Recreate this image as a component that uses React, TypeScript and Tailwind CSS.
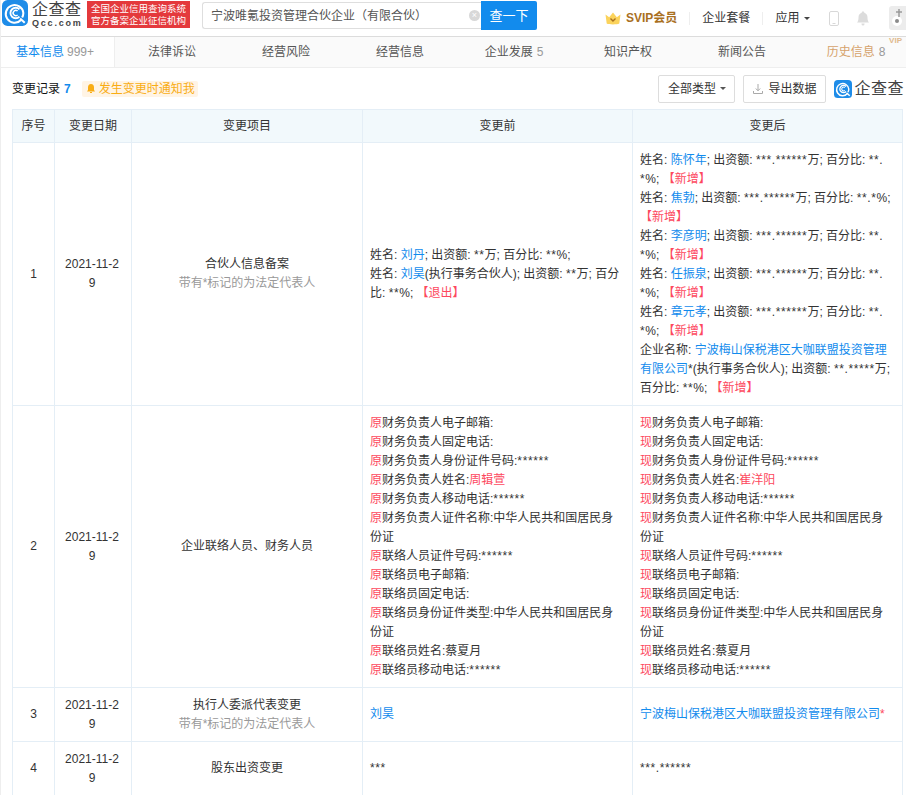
import React from 'react';

const FONT = "font-['Liberation_Sans','Noto_Sans_CJK_SC',sans-serif]";

const QccMark: React.FC<{ size: number }> = ({ size }) => (
  <svg width={size} height={size} viewBox="0 0 28 28" className="shrink-0">
    <rect width="28" height="28" rx="6" fill="#1e8ce8" />
    <path d="M20.500 21.500A9.500 9.500 0 1 1 23 14c0 1.800-.5 3.400-1.300 4.800" fill="none" stroke="#fff" strokeWidth="2.200" />
    <path d="M18.800 10.200a5.600 5.600 0 1 0 0 7.600" fill="none" stroke="#fff" strokeWidth="2" />
    <path d="M16.800 11.800a2.900 2.900 0 1 0 0 4.400" fill="none" stroke="#fff" strokeWidth="1.600" />
    <path d="M19.500 20l5 4.500" stroke="#fff" strokeWidth="2.200" />
  </svg>
);

const TopBar: React.FC = () => (
  <div className="flex h-[37px] items-start overflow-hidden border-b border-[#dcdcdc] bg-white">
    <div className="ml-px flex w-[85px] shrink-0 items-start">
      <QccMark size={26} />
      <div className="ml-[4px] flex w-[50px] flex-col">
        <span className="mt-[1px] text-[16px] leading-[17px] tracking-[0.5px] whitespace-nowrap text-[#444]">企查查</span>
        <span className="mt-[1px] text-[9px] leading-[9px] font-bold tracking-[1.8px] whitespace-nowrap text-[#444]">Qcc.com</span>
      </div>
    </div>
    <div className="mt-[1px] flex h-[27px] w-[103px] shrink-0 flex-col items-center justify-center bg-[#e4393c] text-[9.5px] leading-[12px] whitespace-nowrap text-white">
      <span>全国企业信用查询系统</span>
      <span>官方备案企业征信机构</span>
    </div>
    <div className="mt-[2px] ml-[12px] flex h-[27px] w-[279px] shrink-0 items-center rounded-l-[3px] border border-r-0 border-[#dedede]">
      <span className="ml-[8px] flex-1 text-[12px] whitespace-nowrap text-[#555]">宁波唯氪投资管理合伙企业（有限合伙）</span>
      <span className="mr-[1px] flex h-[11px] w-[11px] items-center justify-center rounded-full bg-[#d8d8d8] text-[9px] leading-none text-white">×</span>
    </div>
    <div className="mt-[1px] flex h-[29px] w-[56px] shrink-0 items-center justify-center rounded-r-[2px] bg-[#128bed] text-[13px] text-white">查一下</div>
    <div className="mt-[6px] ml-[68px] flex shrink-0 items-center whitespace-nowrap">
      <svg width="16" height="13" viewBox="0 0 16 13">
        <path d="M0.500 2.500l3.700 2.700L8 0.500l3.800 4.700 3.700-2.700-1.200 9c-2 1.200-10.600 1.200-12.600 0z" fill="#fbd35c" />
        <path d="M5.500 6.500L8 9l2.500-2.500" fill="none" stroke="#a9701f" strokeWidth="1.400" />
      </svg>
      <span className="ml-[5px] text-[12px] font-bold text-[#a9701f]">SVIP会员</span>
      <span className="mx-[12px] h-[13px] w-px bg-[#eeeeee]" />
      <span className="text-[12px] text-[#333]">企业套餐</span>
      <span className="mx-[12px] h-[13px] w-px bg-[#eeeeee]" />
      <span className="text-[12px] text-[#333]">应用</span>
      <span className="ml-[5px] h-0 w-0 border-x-[3px] border-t-[3px] border-x-transparent border-t-[#444]" />
      <svg width="10" height="15" viewBox="0 0 10 15" className="ml-[19px]">
        <rect x="0.500" y="0.500" width="9" height="14" rx="1.500" fill="none" stroke="#d8d8d8" />
        <path d="M3.500 12.500h3" stroke="#d8d8d8" />
      </svg>
      <svg width="14" height="15" viewBox="0 0 14 15" className="ml-[17px]">
        <path d="M7 0.500c1 0 1.300.6 1.300 1.200C10.500 2.400 11.500 4 11.500 6.500c0 2.500.5 4 1.500 5H1c1-1 1.500-2.500 1.500-5C2.500 4 3.500 2.400 5.700 1.700 5.700 1.100 6 .5 7 .5z" fill="#dcdcdc" />
        <path d="M5.500 12.500h3V13a1.500 1.500 0 0 1-3 0z" fill="#dcdcdc" />
      </svg>
      <svg width="24" height="24" viewBox="0 0 24 24" className="ml-[19px] shrink-0">
        <rect width="24" height="24" rx="3" fill="#ececec" />
        <circle cx="8" cy="15" r="5" fill="#fff" />
        <circle cx="8" cy="15" r="2" fill="#8a8a8a" />
        <path d="M10 3v8M7 6h6" stroke="#9a9a9a" strokeWidth="1.500" />
      </svg>
    </div>
  </div>
);

const tabs: { label: string; count?: string }[] = [
  { label: '法律诉讼' },
  { label: '经营风险' },
  { label: '经营信息' },
  { label: '企业发展', count: '5' },
  { label: '知识产权' },
  { label: '新闻公告' },
];

const TabBar: React.FC = () => (
  <div className="flex h-[31px] items-center border-b border-[#eeeeee] bg-[#fafafa] text-[12px]">
    <div className="flex h-full w-[114px] shrink-0 items-center border-r border-[#eeeeee] bg-white pl-[15px] whitespace-nowrap">
      <span className="text-[#128bed]">基本信息</span>
      <span className="ml-[3px] text-[#999]">999+</span>
    </div>
    <div className="flex flex-1 items-center">
      {tabs.map((t) => (
        <div key={t.label} className="flex w-[114px] shrink-0 justify-center text-[#555]">
          {t.label}
          {t.count && <span className="ml-[4px] text-[#999]">{t.count}</span>}
        </div>
      ))}
      <div className="relative flex w-[114px] shrink-0 justify-center text-[#d6a36c]">
        历史信息
        <span className="ml-[4px] text-[#999]">8</span>
        <span className="absolute top-[-6px] right-[11px] text-[8px] leading-none font-bold text-[#e0b98c]">VIP</span>
      </div>
    </div>
  </div>
);

const Blue: React.FC<{ children: React.ReactNode }> = ({ children }) => <span className="text-[#128bed]">{children}</span>;
const Red: React.FC<{ children: React.ReactNode }> = ({ children }) => <span className="text-[#fd485e]">{children}</span>;
// masked values, the asterisks sit wider apart than in Liberation Sans
const Mask: React.FC<{ children: React.ReactNode }> = ({ children }) => <span className="tracking-[0.6px]">{children}</span>;

const partner = (name: string) => (
  <div key={name}>
    姓名: <Blue>{name}</Blue>; 出资额: <Mask>***.******</Mask>万; 百分比: <Mask>**.<wbr />*</Mask>%; <Red>【新增】</Red>
  </div>
);

const financeRows = (tag: string, person: string) => (
  [
    ['财务负责人电子邮箱:', '', ''],
    ['财务负责人固定电话:', '', ''],
    ['财务负责人身份证件号码:', '******', ''],
    ['财务负责人姓名:', '', person],
    ['财务负责人移动电话:', '******', ''],
    ['财务负责人证件名称:中华人民共和国居民身份证', '', ''],
    ['联络人员证件号码:', '******', ''],
    ['联络员电子邮箱:', '', ''],
    ['联络员固定电话:', '', ''],
    ['联络员身份证件类型:中华人民共和国居民身份证', '', ''],
    ['联络员姓名:蔡夏月', '', ''],
    ['联络员移动电话:', '******', ''],
  ].map(([text, stars, red]) => (
    <div key={text}>
      <Red>{tag}</Red>
      {text}
      {stars && <Mask>{stars}</Mask>}
      {red && <Red>{red}</Red>}
    </div>
  ))
);

const Sub: React.FC = () => <div className="text-[#999]">带有*标记的为法定代表人</div>;

const cell = 'border border-[#e4eef6] px-[7px] py-[7.5px] align-middle';
const centerCell = `${cell} text-center`;
const dateCell = 'border border-[#e4eef6] pl-[7px] pr-[9px] py-[7.5px] align-middle text-center break-all';
const th = 'border border-[#e4eef6] bg-[#f2f9fc] px-[7px] text-center font-normal';
const DATE = '2021-11-29';

const ChangeTable: React.FC = () => (
  <table className="w-[890px] table-fixed border-collapse text-[12px] leading-[19px] text-[#333]">
    <colgroup>
      <col className="w-[42px]" />
      <col className="w-[77px]" />
      <col className="w-[231px]" />
      <col className="w-[270px]" />
      <col className="w-[270px]" />
    </colgroup>
    <thead>
      <tr className="h-[33px]">
        <th className={th}>序号</th>
        <th className={th}>变更日期</th>
        <th className={th}>变更项目</th>
        <th className={th}>变更前</th>
        <th className={th}>变更后</th>
      </tr>
    </thead>
    <tbody>
      <tr>
        <td className={centerCell}>1</td>
        <td className={dateCell}>{DATE}</td>
        <td className={centerCell}>
          合伙人信息备案
          <Sub />
        </td>
        <td className={cell}>
          <div>姓名: <Blue>刘丹</Blue>; 出资额: <Mask>**</Mask>万; 百分比: <Mask>**</Mask>%;</div>
          <div>姓名: <Blue>刘昊</Blue>(执行事务合伙人); 出资额: <Mask>**</Mask>万; 百分比: <Mask>**</Mask>%; <Red>【退出】</Red></div>
        </td>
        <td className={cell}>
          {partner('陈怀年')}
          {partner('焦勃')}
          {partner('李彦明')}
          {partner('任振泉')}
          {partner('章元孝')}
          <div>
            企业名称: <Blue>宁波梅山保税港区大咖联盟投资管理有限公司</Blue>*(执行事务合伙人); 出资额: <Mask>**.*****</Mask>万; 百分比: <Mask>**</Mask>%; <Red>【新增】</Red>
          </div>
        </td>
      </tr>
      <tr>
        <td className={centerCell}>2</td>
        <td className={dateCell}>{DATE}</td>
        <td className={centerCell}>企业联络人员、财务人员</td>
        <td className={cell}>{financeRows('原', '周辑萱')}</td>
        <td className={cell}>{financeRows('现', '崔洋阳')}</td>
      </tr>
      <tr>
        <td className={centerCell}>3</td>
        <td className={dateCell}>{DATE}</td>
        <td className={centerCell}>
          执行人委派代表变更
          <Sub />
        </td>
        <td className={cell}><Blue>刘昊</Blue></td>
        <td className={cell}><Blue>宁波梅山保税港区大咖联盟投资管理有限公司</Blue><Red>*</Red></td>
      </tr>
      <tr>
        <td className={centerCell}>4</td>
        <td className={dateCell}>{DATE}</td>
        <td className={centerCell}>股东出资变更</td>
        <td className={cell}><Mask>***</Mask></td>
        <td className={cell}><Mask>***.******</Mask></td>
      </tr>
    </tbody>
  </table>
);

const App: React.FC = () => (
  <div className={`${FONT} h-[795px] w-[906px] overflow-hidden border-l border-[#eeeeee] bg-white`}>
    <TopBar />
    <TabBar />
    <div className="flex h-[41px] items-center pr-[2px] pl-[11px] whitespace-nowrap">
      <span className="text-[12px] text-[#111]">变更记录</span>
      <span className="ml-[4px] text-[12px] font-bold text-[#128bed]">7</span>
      <div className="ml-[11px] flex h-[16px] items-center rounded-[2px] bg-[#fff4e5] pr-[3px] pl-[5px] text-[12px] text-[#f9ad14]">
        <svg width="8" height="9" viewBox="0 0 8 9" className="mr-[4px]">
          <path d="M4 0c2 0 3 1.500 3 3.500V6l1 1.500H0L1 6V3.500C1 1.500 2 0 4 0zM3 8h2v1H3z" fill="#f9ad14" />
        </svg>
        发生变更时通知我
      </div>
      <div className="ml-auto flex items-center">
        <div className="flex h-[28px] w-[77px] items-center justify-center rounded-[2px] border border-[#dddddd] text-[12px] text-[#333]">
          全部类型
          <span className="ml-[4px] h-0 w-0 border-x-[3px] border-t-[3px] border-x-transparent border-t-[#555]" />
        </div>
        <div className="ml-[8px] flex h-[28px] w-[83px] items-center justify-center rounded-[2px] border border-[#dddddd] text-[12px] text-[#333]">
          <svg width="10" height="10" viewBox="0 0 10 10" className="mr-[5px]">
            <path d="M5 0v6.500M2.800 4.500L5 6.800l2.200-2.300M.5 7v2.500h9V7" fill="none" stroke="#aaaaaa" />
          </svg>
          导出数据
        </div>
        <div className="ml-[8px] flex items-center">
          <QccMark size={18} />
          <span className="ml-[2px] text-[16px] leading-none tracking-[0.5px] text-[#444]">企查查</span>
        </div>
      </div>
    </div>
    <div className="pl-[11px]">
      <ChangeTable />
    </div>
  </div>
);

export default App;
